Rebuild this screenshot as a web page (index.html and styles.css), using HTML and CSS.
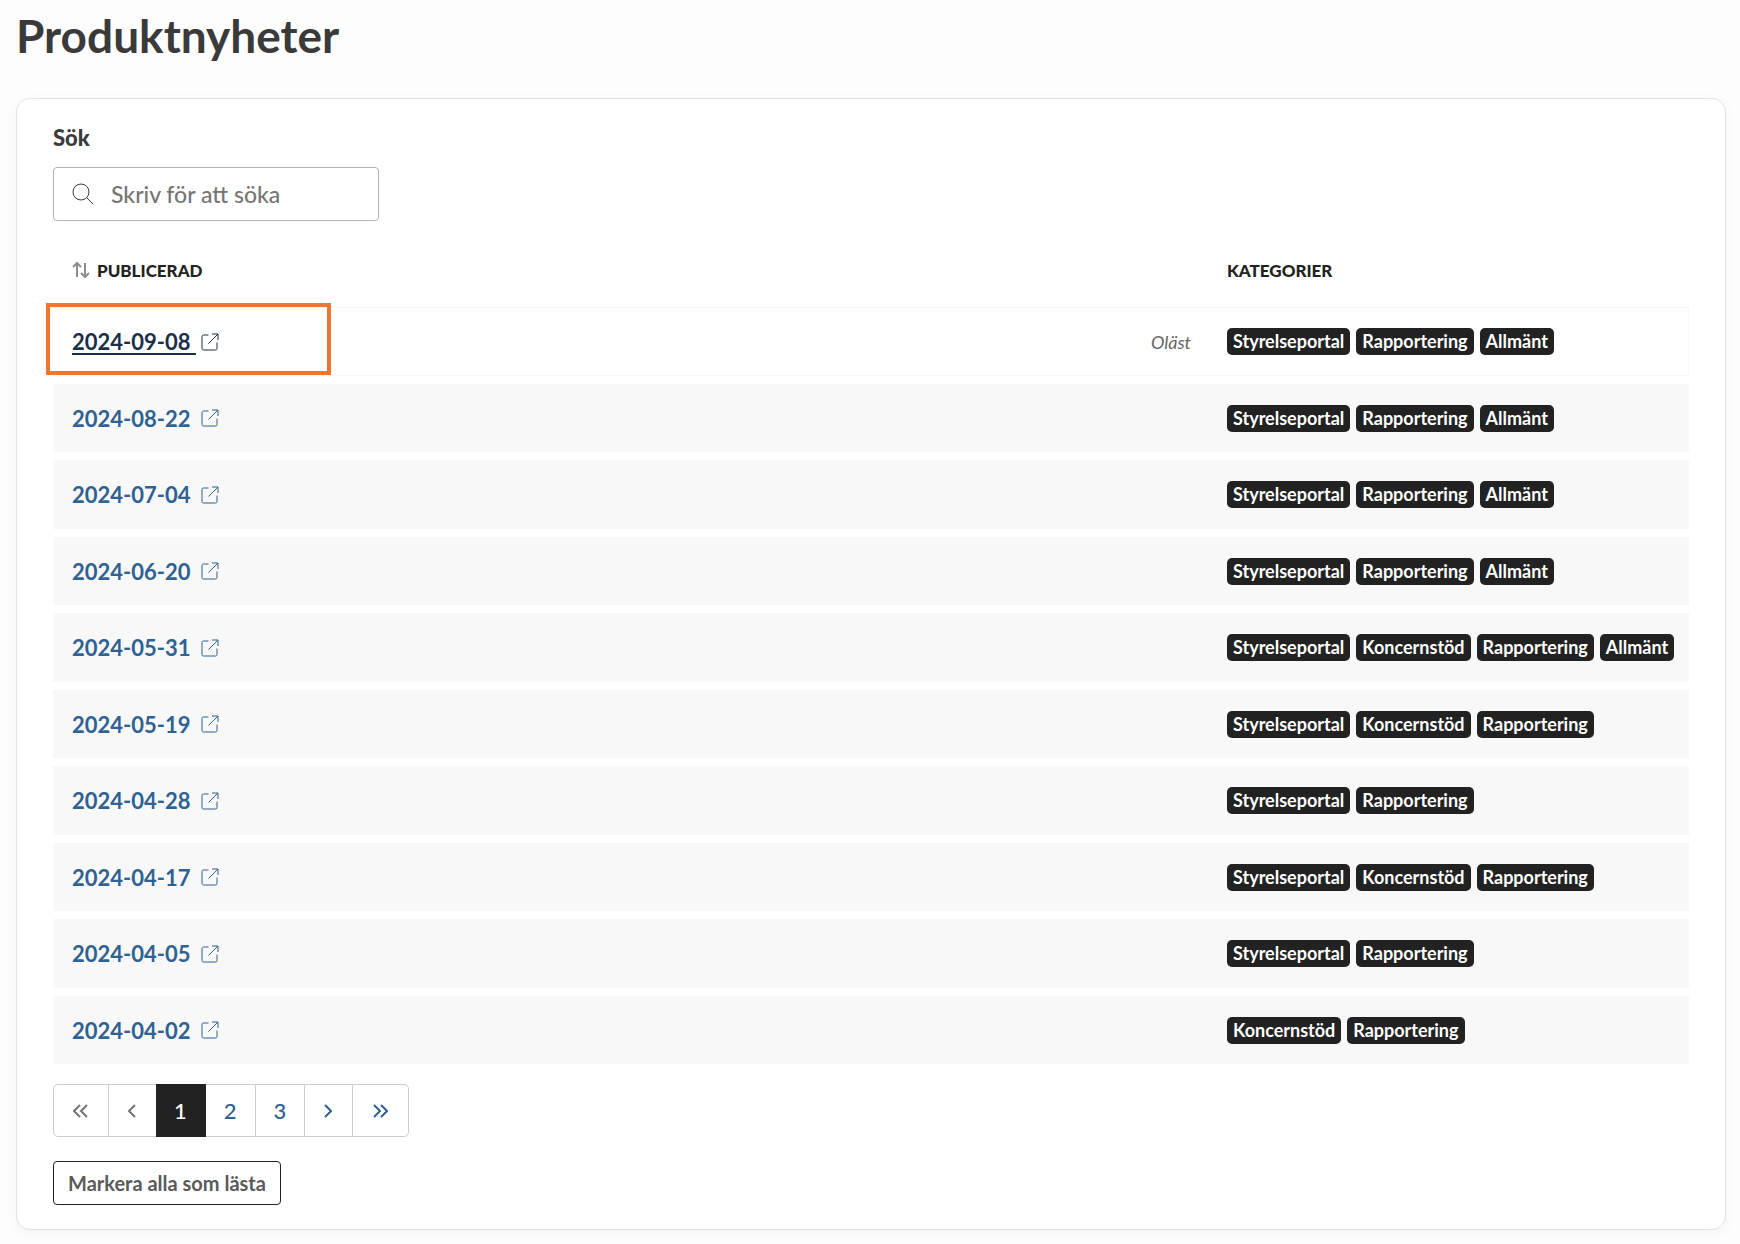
FILE: index.html
```html
<!DOCTYPE html>
<html lang="sv">
<head>
   <meta charset="UTF-8">
   <meta name="viewport" content="width=device-width, initial-scale=1">
   <title>Produktnyheter</title>
   <link rel="stylesheet" href="styles.css">
</head>
<body>
<svg class="sprite" aria-hidden="true">
   <symbol id="icon-external" viewBox="0 0 18 18">
      <path d="M7.5 2H2.5Q1 2 1 3.500V15.500Q1 17 2.500 17H14.500Q16 17 16 15.500V9.500M11 1H17V7M17 1L7.500 10.500"/>
   </symbol>
</svg>

<h1>Produktnyheter</h1>

<main class="card">
   <label class="search-label" for="search">Sök</label>
   <div class="search">
      <svg class="search-icon" viewBox="0 0 22 22" aria-hidden="true"><circle cx="9" cy="9" r="8"/><path d="M14.700 14.700L21 21"/></svg>
      <input id="search" type="text" placeholder="Skriv för att söka">
   </div>

   <div class="list">
      <table class="news">
         <thead>
            <tr>
               <th>
                  <button class="sort" type="button">
                     <svg class="sort-icon" viewBox="0 0 18 16" aria-hidden="true"><path d="M5 15V1M1 5L5 1L9 5M13 1V15M9 11L13 15L17 11"/></svg>PUBLICERAD
                  </button>
               </th>
               <th></th>
               <th class="categories">KATEGORIER</th>
            </tr>
         </thead>
         <tbody>
            <tr class="unread">
               <td><a href="#"><span>2024-09-08&nbsp;</span><svg class="ext"><use href="#icon-external"/></svg></a></td>
               <td class="status">Oläst</td>
               <td><div class="tags"><span>Styrelseportal</span><span>Rapportering</span><span>Allmänt</span></div></td>
            </tr>
            <tr>
               <td><a href="#"><span>2024-08-22&nbsp;</span><svg class="ext"><use href="#icon-external"/></svg></a></td>
               <td></td>
               <td><div class="tags"><span>Styrelseportal</span><span>Rapportering</span><span>Allmänt</span></div></td>
            </tr>
            <tr>
               <td><a href="#"><span>2024-07-04&nbsp;</span><svg class="ext"><use href="#icon-external"/></svg></a></td>
               <td></td>
               <td><div class="tags"><span>Styrelseportal</span><span>Rapportering</span><span>Allmänt</span></div></td>
            </tr>
            <tr>
               <td><a href="#"><span>2024-06-20&nbsp;</span><svg class="ext"><use href="#icon-external"/></svg></a></td>
               <td></td>
               <td><div class="tags"><span>Styrelseportal</span><span>Rapportering</span><span>Allmänt</span></div></td>
            </tr>
            <tr>
               <td><a href="#"><span>2024-05-31&nbsp;</span><svg class="ext"><use href="#icon-external"/></svg></a></td>
               <td></td>
               <td><div class="tags"><span>Styrelseportal</span><span>Koncernstöd</span><span>Rapportering</span><span>Allmänt</span></div></td>
            </tr>
            <tr>
               <td><a href="#"><span>2024-05-19&nbsp;</span><svg class="ext"><use href="#icon-external"/></svg></a></td>
               <td></td>
               <td><div class="tags"><span>Styrelseportal</span><span>Koncernstöd</span><span>Rapportering</span></div></td>
            </tr>
            <tr>
               <td><a href="#"><span>2024-04-28&nbsp;</span><svg class="ext"><use href="#icon-external"/></svg></a></td>
               <td></td>
               <td><div class="tags"><span>Styrelseportal</span><span>Rapportering</span></div></td>
            </tr>
            <tr>
               <td><a href="#"><span>2024-04-17&nbsp;</span><svg class="ext"><use href="#icon-external"/></svg></a></td>
               <td></td>
               <td><div class="tags"><span>Styrelseportal</span><span>Koncernstöd</span><span>Rapportering</span></div></td>
            </tr>
            <tr>
               <td><a href="#"><span>2024-04-05&nbsp;</span><svg class="ext"><use href="#icon-external"/></svg></a></td>
               <td></td>
               <td><div class="tags"><span>Styrelseportal</span><span>Rapportering</span></div></td>
            </tr>
            <tr>
               <td><a href="#"><span>2024-04-02&nbsp;</span><svg class="ext"><use href="#icon-external"/></svg></a></td>
               <td></td>
               <td><div class="tags"><span>Koncernstöd</span><span>Rapportering</span></div></td>
            </tr>
         </tbody>
      </table>
      <div class="marker"></div>
   </div>

   <nav class="pages" aria-label="Sidor">
      <button type="button" disabled aria-label="Första sidan"><svg class="double" viewBox="0 0 15 14"><path d="M7 1L1 7L7 13M14 1L8 7L14 13"/></svg></button>
      <button type="button" disabled aria-label="Föregående sida"><svg class="single" viewBox="0 0 8 14"><path d="M7 1L1 7L7 13"/></svg></button>
      <a href="#" class="number current" aria-current="page">1</a>
      <a href="#" class="number">2</a>
      <a href="#" class="number">3</a>
      <a href="#" aria-label="Nästa sida"><svg class="single" viewBox="0 0 8 14"><path d="M1 1L7 7L1 13"/></svg></a>
      <a href="#" aria-label="Sista sidan"><svg class="double" viewBox="0 0 15 14"><path d="M1 1L7 7L1 13M8 1L14 7L8 13"/></svg></a>
   </nav>

   <button class="mark-read" type="button">Markera alla som lästa</button>
</main>
</body>
</html>
```
FILE: styles.css
```css
* {
   box-sizing: border-box;
}

body {
   margin: 0;
   padding: 10px 14px 14px 16px;
   background: #fdfdfd;
   color: #3a3a3a;
   font-family: Lato, "Open Sans", sans-serif;
   font-size: 22px;
}

svg {
   fill: none;
   stroke: currentColor;
}

.sprite {
   position: absolute;
   width: 0;
   height: 0;
}

h1 {
   margin: 0 0 36px;
   font-size: 46px;
   line-height: 52px;
   font-weight: 700;
}

.card {
   padding: 23px 36px 24px;
   background: #fff;
   border: 1px solid #e2e2e2;
   border-radius: 14px;
   box-shadow: 0 3px 14px rgba(0, 0, 0, 0.04);
}

.search-label {
   display: block;
   margin-bottom: 13px;
   line-height: 32px;
   font-weight: 900;
}

.search {
   display: flex;
   align-items: center;
   gap: 17px;
   width: 326px;
   height: 54px;
   padding: 0 18px;
   border: 1px solid #b3b3b3;
   border-radius: 4px;
}

.search-icon {
   flex: none;
   width: 22px;
   height: 22px;
}

.search input {
   flex: 1;
   min-width: 0;
   padding: 0;
   border: 0;
   outline: 0;
   background: none;
   color: inherit;
   font: inherit;
   font-size: 23px;
}

.search input::placeholder {
   color: #757575;
   font-weight: 500;
   opacity: 1;
}

.list {
   position: relative;
   margin-top: 20px;
}

.news {
   width: 100%;
   border-collapse: separate;
   border-spacing: 0 8px;
}

.news th {
   height: 50px;
   padding: 0 19px 8px;
   color: #222;
   font-size: 17px;
   font-weight: 900;
   text-align: left;
}

.news .categories {
   width: 481px;
}

.sort {
   display: flex;
   align-items: center;
   gap: 7px;
   padding: 0;
   border: 0;
   background: none;
   color: inherit;
   font: inherit;
}

.sort-icon {
   width: 18px;
   height: 16px;
   color: #8c8c8c;
   stroke-width: 2;
}

.news td {
   height: 69px;
   padding: 0 14px 0 19px;
   background: #f8f8f8;
}

.news tr:nth-child(even) td {
   height: 68px;
}

.news .unread td {
   background: none;
   border: 1px solid #f8f8f8;
   border-width: 1px 0;
}

.news .unread td:last-child {
   border-right-width: 1px;
}

.news a {
   display: inline-flex;
   align-items: center;
   gap: 5px;
   color: #2f6192;
   font-weight: 700;
   text-decoration: none;
}

.news .unread a {
   color: #1a2f49;
}

.news .unread a span {
   text-decoration: underline;
   text-decoration-thickness: 2px;
   text-underline-offset: 3px;
}

.ext {
   width: 18px;
   height: 18px;
}

.news .status {
   padding-right: 17px;
   color: #666;
   font-size: 18px;
   font-style: italic;
   text-align: right;
}

.tags {
   display: flex;
   gap: 6px;
}

.tags span {
   padding: 0 6px;
   border-radius: 5px;
   background: #222;
   color: #fff;
   font-size: 18px;
   line-height: 27px;
   font-weight: 700;
   white-space: nowrap;
}

.marker {
   position: absolute;
   top: 62px;
   left: -7px;
   width: 285px;
   height: 72px;
   border: 4px solid #ee7630;
   pointer-events: none;
}

.pages {
   display: flex;
   width: fit-content;
   height: 53px;
   margin-top: 12px;
   border: 1px solid #ccc;
   border-radius: 5px;
}

.pages a,
.pages button {
   display: flex;
   align-items: center;
   padding: 0 20px 0 19px;
   border: 0;
   border-right: 1px solid #ccc;
   background: none;
   color: #2f6192;
   font: inherit;
   font-weight: 500;
   text-decoration: none;
}

.pages button {
   color: #757575;
}

.pages .number {
   padding: 0 18px;
}

.pages a:last-child {
   padding: 0 20px;
   border-right: 0;
}

.pages .current {
   margin: -1px 0 -1px -1px;
   border-color: #222;
   background: #222;
   color: #fff;
}

.pages svg {
   height: 14px;
   stroke-width: 2;
}

.double {
   width: 15px;
}

.single {
   width: 8px;
}

.mark-read {
   display: block;
   height: 44px;
   margin-top: 24px;
   padding: 0 14px;
   border: 1px solid #222;
   border-radius: 4px;
   background: #fff;
   color: #5a5a5a;
   font: inherit;
   font-size: 20px;
   font-weight: 700;
}
```
